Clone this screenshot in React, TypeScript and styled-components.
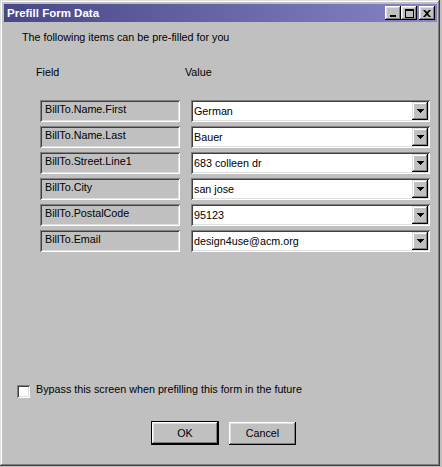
import { Fragment } from "react";
import styled, { createGlobalStyle } from "styled-components";

const GlobalStyle = createGlobalStyle`
  html, body {
    margin: 0;
    padding: 0;
  }
  body {
    background: #c0c0c0;
    font-family: "Liberation Sans", Arial, sans-serif;
  }
`;

const raised = `
  box-shadow: inset -1px -1px #404040, inset 1px 1px #dfdfdf,
    inset -2px -2px #808080, inset 2px 2px #ffffff;
`;

const sunken = `
  box-shadow: inset 1px 1px #808080, inset -1px -1px #ffffff,
    inset 2px 2px #404040, inset -2px -2px #dfdfdf;
`;

const Window = styled.div`
  box-sizing: border-box;
  width: 440px;
  height: 466px;
  padding: 4px 3px 4px 4px;
  background: #c0c0c0;
  ${raised}
  display: flex;
  flex-direction: column;
  color: #000;
  font-size: 10.75px;
  line-height: 13px;
`;

const TitleBar = styled.div`
  height: 18px;
  display: flex;
  align-items: center;
  padding: 0 2px 0 3px;
  background: linear-gradient(to right, #484888, #8484c6);
  color: #fff;
  font-weight: bold;
  font-size: 11.5px;
`;

const TitleText = styled.span`
  flex: 1;
`;

const CaptionButton = styled.div<{ $gap?: number }>`
  width: 16px;
  height: 14px;
  margin-left: ${p => p.$gap ?? 0}px;
  background: #c0c0c0;
  box-shadow: inset -1px -1px #000000, inset 1px 1px #ffffff,
    inset -2px -2px #808080, inset 2px 2px #dfdfdf;
  display: flex;
  align-items: center;
  justify-content: center;
`;

const Intro = styled.div`
  margin: 9px 0 0 18px;
`;

const Table = styled.div`
  margin: 22px 0 0 36px;
  display: grid;
  grid-template-columns: 140px 239px;
  column-gap: 11px;
  row-gap: 4px;
`;

const HeadCell = styled.div<{ $shift: number }>`
  margin: 0 0 17px ${p => p.$shift}px;
`;

const FieldBox = styled.div`
  box-sizing: border-box;
  height: 22px;
  padding: 3px 4px 0 5px;
  ${sunken}
  white-space: nowrap;
`;

const Combo = styled.div`
  box-sizing: border-box;
  height: 22px;
  padding: 2px;
  background: #fff;
  ${sunken}
  display: flex;
  align-items: center;
`;

const ComboText = styled.span`
  flex: 1;
  padding-left: 1px;
  white-space: nowrap;
`;

const DropButton = styled.div`
  width: 16px;
  height: 18px;
  background: #c0c0c0;
  box-shadow: inset -1px -1px #000000, inset 1px 1px #dfdfdf,
    inset -2px -2px #808080, inset 2px 2px #ffffff;
  display: flex;
  align-items: center;
  justify-content: center;
`;

const CheckRow = styled.label`
  margin: auto 0 0 13px;
  display: flex;
  align-items: flex-start;
  gap: 6px;
`;

const CheckBox = styled.span`
  width: 13px;
  height: 13px;
  background: #fff;
  ${sunken}
`;

const CheckText = styled.span`
  margin-top: -2px;
`;

const ButtonRow = styled.div`
  margin: 23px 0 17px 147px;
  display: flex;
  align-items: flex-start;
  gap: 10px;
`;

const PushButton = styled.div<{ $default?: boolean }>`
  box-sizing: border-box;
  width: ${p => (p.$default ? 68 : 67)}px;
  height: ${p => (p.$default ? 24 : 23)}px;
  margin-top: ${p => (p.$default ? 0 : 1)}px;
  border: ${p => (p.$default ? "1px solid #000" : "0")};
  background: #c0c0c0;
  box-shadow: inset -1px -1px #000000, inset 1px 1px #ffffff,
    inset -2px -2px #808080, inset 2px 2px #dfdfdf;
  display: flex;
  align-items: center;
  justify-content: center;
`;

const rows = [
  { field: "BillTo.Name.First", value: "German" },
  { field: "BillTo.Name.Last", value: "Bauer" },
  { field: "BillTo.Street.Line1", value: "683 colleen dr" },
  { field: "BillTo.City", value: "san jose" },
  { field: "BillTo.PostalCode", value: "95123" },
  { field: "BillTo.Email", value: "design4use@acm.org" },
];

const Arrow = () => (
  <svg width="7" height="4" viewBox="0 0 7 4">
    <path d="M0 0h7v1h-1v1h-1v1h-1v1h-1v-1h-1v-1h-1v-1h-1z" fill="#000" />
  </svg>
);

export default function App() {
  return (
    <>
      <GlobalStyle />
      <Window>
        <TitleBar>
          <TitleText>Prefill Form Data</TitleText>
          <CaptionButton>
            <svg width="8" height="8" viewBox="0 0 8 8">
              <rect x="1" y="6" width="6" height="2" fill="#000" />
            </svg>
          </CaptionButton>
          <CaptionButton>
            <svg width="9" height="9" viewBox="0 0 9 9">
              <path d="M0 0h9v9h-9z M1 2v6h7v-6z" fill="#000" fillRule="evenodd" />
            </svg>
          </CaptionButton>
          <CaptionButton $gap={2}>
            <svg width="8" height="7" viewBox="0 0 8 7">
              <path d="M0 0h2l2 2l2-2h2l-3 3.5l3 3.5h-2l-2-2l-2 2h-2l3-3.5z" fill="#000" />
            </svg>
          </CaptionButton>
        </TitleBar>

        <Intro>The following items can be pre-filled for you</Intro>

        <Table>
          <HeadCell $shift={-4}>Field</HeadCell>
          <HeadCell $shift={-6}>Value</HeadCell>
          {rows.map(r => (
            <Fragment key={r.field}>
              <FieldBox>{r.field}</FieldBox>
              <Combo>
                <ComboText>{r.value}</ComboText>
                <DropButton>
                  <Arrow />
                </DropButton>
              </Combo>
            </Fragment>
          ))}
        </Table>

        <CheckRow>
          <CheckBox />
          <CheckText>Bypass this screen when prefilling this form in the future</CheckText>
        </CheckRow>

        <ButtonRow>
          <PushButton $default>OK</PushButton>
          <PushButton>Cancel</PushButton>
        </ButtonRow>
      </Window>
    </>
  );
}
